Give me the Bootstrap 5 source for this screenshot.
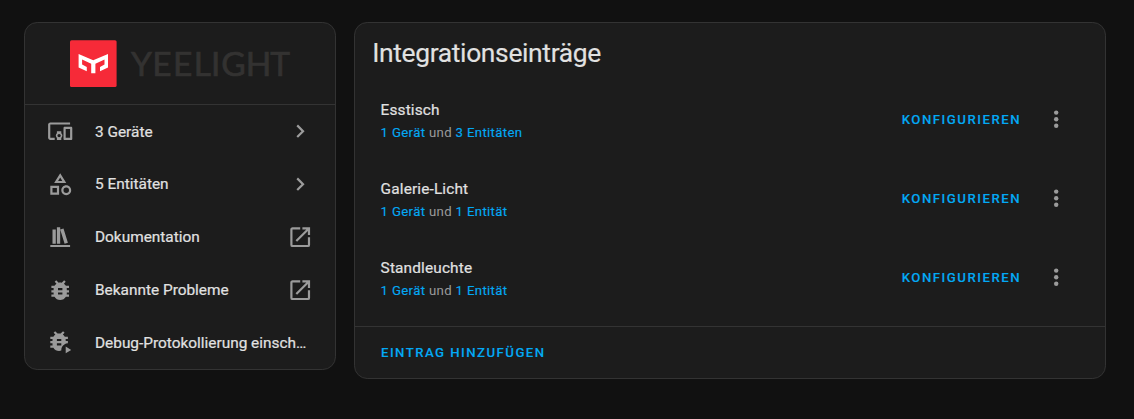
<!DOCTYPE html>
<html lang="de" data-bs-theme="dark">
<head>
<meta charset="utf-8">
<title>Yeelight</title>
<link href="https://cdn.jsdelivr.net/npm/bootstrap@5.3.0/dist/css/bootstrap.min.css" rel="stylesheet">
<style>
body{background:#111;color:#e1e1e1;font-family:Roboto,sans-serif;height:419px;overflow:hidden}
.page{padding:22px 28px 0 24px;gap:18px}
.panel{background:#1c1c1c;border:1px solid #333;border-radius:13.2px;overflow:hidden}
.side{width:312px;height:348px;flex:none}
.entries{width:752px;height:357px;flex:none}
.brand-head{height:82px;border-bottom:1px solid #333;padding:17px 0 0 45px}
.side .list-group-item{height:52.8px;padding:0 22px;background:none;border:0;color:#e1e1e1;font-size:15.4px;letter-spacing:0}
.ico{width:26.4px;height:26.4px;fill:#9b9b9b;flex:none}
.label-txt{margin-left:21.6px;padding-top:1.4px;-webkit-text-stroke:.2px #e1e1e1}
h1{color:#e1e1e1;font-size:26.4px;line-height:34px;font-weight:400;letter-spacing:-.34px;padding:13px 0 0 17.2px;height:57px;-webkit-text-stroke:.15px #e1e1e1}
.entry{height:79.2px;padding:0 36px 0 25.6px}
.entry-text{padding-top:3.3px}
.entry-name{font-size:15.4px;line-height:22px;letter-spacing:.15px;-webkit-text-stroke:.2px #e1e1e1}
.entry-sub{font-size:13.2px;line-height:23px;letter-spacing:.34px;color:#9b9b9b}
.entry-sub a{color:#03a9f4;-webkit-text-stroke:.15px #03a9f4}
.txt-btn{color:#03a9f4;font-size:13.2px;font-weight:500;letter-spacing:1.51px;text-transform:uppercase;border:0;padding:0;line-height:20px;-webkit-text-stroke:.1px #03a9f4}
.kebab{margin-left:21.5px;margin-bottom:.6px}
.foot .txt-btn{letter-spacing:1.46px}
.foot{border-top:1px solid #333;height:53px;margin-top:8px;padding-left:26px}
</style>
</head>
<body>
<svg class="d-none">
<symbol id="dev" viewBox="0 0 24 24"><path d="M3 6H21V4H3C1.9 4 1 4.9 1 6V18C1 19.1 1.9 20 3 20H7V18H3V6M13 12H9V13.78C8.39 14.33 8 15.11 8 16C8 16.89 8.39 17.67 9 18.22V20H13V18.22C13.61 17.67 14 16.88 14 16S13.61 14.33 13 13.78V12M11 17.5C10.17 17.5 9.5 16.83 9.5 16S10.17 14.5 11 14.5 12.5 15.17 12.5 16 11.83 17.5 11 17.5M22 8H16C15.5 8 15 8.5 15 9V19C15 19.5 15.5 20 16 20H22C22.5 20 23 19.5 23 19V9C23 8.5 22.5 8 22 8M21 18H17V10H21V18Z"/></symbol>
<symbol id="shape" viewBox="0 0 24 24"><path d="M11,13.5V21.5H3V13.5H11M9,15.5H5V19.5H9V15.5M12,2L17.5,11H6.5L12,2M12,5.86L10.08,9H13.92L12,5.86M17.5,13C20,13 22,15 22,17.5C22,20 20,22 17.5,22C15,22 13,20 13,17.5C13,15 15,13 17.5,13M17.5,15A2.5,2.5 0 0,0 15,17.5A2.5,2.5 0 0,0 17.5,20A2.5,2.5 0 0,0 20,17.5A2.5,2.5 0 0,0 17.5,15Z"/></symbol>
<symbol id="books" viewBox="0 0 24 24"><path d="M9 3V18H12V3H9M12 5L16 18L19 17L15 4L12 5M5 5V18H8V5H5M3 19V21H21V19H3Z"/></symbol>
<symbol id="bug" viewBox="0 0 24 24"><path d="M14,12H10V10H14M14,16H10V14H14M20,8H17.19C16.74,7.22 16.12,6.55 15.37,6.04L17,4.41L15.59,3L13.42,5.17C12.96,5.06 12.5,5 12,5C11.5,5 11.04,5.06 10.59,5.17L8.41,3L7,4.41L8.62,6.04C7.88,6.55 7.26,7.22 6.81,8H4V10H6.09C6.04,10.33 6,10.66 6,11V12H4V14H6V15C6,15.34 6.04,15.67 6.09,16H4V18H6.81C7.85,19.79 9.78,21 12,21C14.22,21 16.15,19.79 17.19,18H20V16H17.91C17.96,15.67 18,15.34 18,15V14H20V12H18V11C18,10.66 17.96,10.33 17.91,10H20V8Z"/></symbol>
<symbol id="bugplay" viewBox="0 0 24 24"><path fill-rule="evenodd" d="M19 7H16.19C15.74 6.2 15.12 5.5 14.37 5L16 3.41L14.59 2L12.42 4.17C11.96 4.06 11.5 4 11 4S10.05 4.06 9.59 4.17L7.41 2L6 3.41L7.62 5C6.87 5.5 6.26 6.21 5.81 7H3V9H5.09C5.03 9.33 5 9.66 5 10V11H3V13H5V14C5 14.34 5.03 14.67 5.09 15H3V17H5.81C7.26 19.5 10.28 20.61 13 19.65C13 19.43 13 19.22 13 19C13 16.9 14.1 15 15.8 14C16.7 13.4 17.8 13 19 13V11H17V10C17 9.66 16.97 9.33 16.91 9H19V7M13 9V11H9V9H13M13 13V15H9V13H13M17 16V22L22 19L17 16Z"/></symbol>
<symbol id="chev" viewBox="0 0 24 24"><path d="M8.59,16.58L13.17,12L8.59,7.41L10,6L16,12L10,18L8.59,16.58Z"/></symbol>
<symbol id="open" viewBox="0 0 24 24"><path d="M14,3V5H17.59L7.76,14.83L9.17,16.24L19,6.41V10H21V3M19,19H5V5H12V3H5C3.89,3 3,3.9 3,5V19A2,2 0 0,0 5,21H19A2,2 0 0,0 21,19V12H19V19Z"/></symbol>
<symbol id="dots" viewBox="0 0 24 24"><circle cx="12" cy="6" r="2"/><circle cx="12" cy="12" r="2"/><circle cx="12" cy="18" r="2"/></symbol>
</svg>
<div class="page d-flex align-items-start">
  <aside class="panel side">
    <div class="brand-head">
      <svg class="d-block" width="222" height="48" viewBox="0 0 222 48" role="img" aria-label="Yeelight">
        <rect x="0" y="0.2" width="46.6" height="46.8" rx="1.6" fill="#f62a38"/>
        <path fill="#fff" d="M8.6 14L23.2 20.2L38 14V27.5L30 31.2V27L34.5 24.6V19.6L25.4 23.8V33.2H21.2V23.8L12.1 19.6V24.6L16.8 27V31.2L8.6 27.5Z"/>
        <text x="61 82.3 103 123.7 141 151.2 175.7 200.2" y="35.8" font-family="Lato,sans-serif" font-size="33.5" fill="#333231" stroke="#333231" stroke-width=".7">YEELIGHT</text>
      </svg>
    </div>
    <div class="list-group list-group-flush">
      <a class="list-group-item d-flex align-items-center"><svg class="ico"><use href="#dev"/></svg><span class="label-txt">3 Geräte</span><svg class="ico ms-auto"><use href="#chev"/></svg></a>
      <a class="list-group-item d-flex align-items-center"><svg class="ico"><use href="#shape"/></svg><span class="label-txt">5 Entitäten</span><svg class="ico ms-auto"><use href="#chev"/></svg></a>
      <a class="list-group-item d-flex align-items-center"><svg class="ico"><use href="#books"/></svg><span class="label-txt">Dokumentation</span><svg class="ico ms-auto"><use href="#open"/></svg></a>
      <a class="list-group-item d-flex align-items-center"><svg class="ico"><use href="#bug"/></svg><span class="label-txt">Bekannte Probleme</span><svg class="ico ms-auto"><use href="#open"/></svg></a>
      <a class="list-group-item d-flex align-items-center"><svg class="ico"><use href="#bugplay"/></svg><span class="label-txt text-nowrap">Debug-Protokollierung einsch…</span></a>
    </div>
  </aside>
  <main class="panel entries">
    <h1 class="m-0">Integrationseinträge</h1>
    <div class="entry d-flex align-items-center">
      <div class="entry-text"><div class="entry-name">Esstisch</div><div class="entry-sub"><a class="text-decoration-none" href="#">1 Gerät</a> und <a class="text-decoration-none" href="#">3 Entitäten</a></div></div>
      <button class="btn txt-btn ms-auto">Konfigurieren</button><svg class="ico kebab"><use href="#dots"/></svg>
    </div>
    <div class="entry d-flex align-items-center">
      <div class="entry-text"><div class="entry-name">Galerie-Licht</div><div class="entry-sub"><a class="text-decoration-none" href="#">1 Gerät</a> und <a class="text-decoration-none" href="#">1 Entität</a></div></div>
      <button class="btn txt-btn ms-auto">Konfigurieren</button><svg class="ico kebab"><use href="#dots"/></svg>
    </div>
    <div class="entry d-flex align-items-center">
      <div class="entry-text"><div class="entry-name">Standleuchte</div><div class="entry-sub"><a class="text-decoration-none" href="#">1 Gerät</a> und <a class="text-decoration-none" href="#">1 Entität</a></div></div>
      <button class="btn txt-btn ms-auto">Konfigurieren</button><svg class="ico kebab"><use href="#dots"/></svg>
    </div>
    <div class="foot d-flex align-items-center"><button class="btn txt-btn">Eintrag hinzufügen</button></div>
  </main>
</div>
<script src="https://cdn.jsdelivr.net/npm/bootstrap@5.3.0/dist/js/bootstrap.bundle.min.js"></script>
</body>
</html>
